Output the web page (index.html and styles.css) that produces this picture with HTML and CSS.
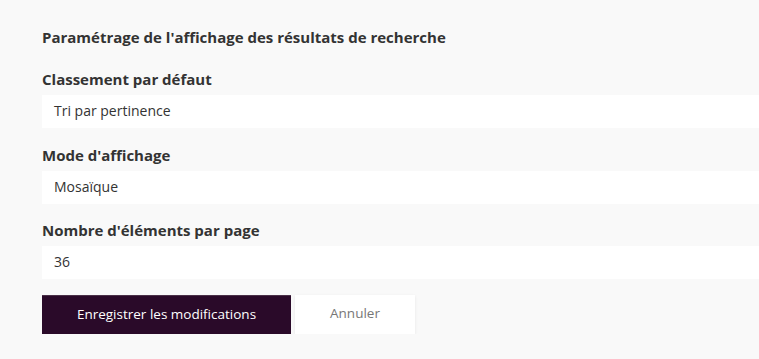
FILE: index.html
```html
<!DOCTYPE html>
<html lang="fr">
<head>
    <meta charset="UTF-8">
    <meta name="viewport" content="width=device-width, initial-scale=1.0">
    <title>Paramétrage de l'affichage</title>
    <link rel="stylesheet" href="styles.css">
</head>
<body>
    <form class="settings">
        <h2>Paramétrage de l'affichage des résultats de recherche</h2>

        <div class="field">
            <label for="sort">Classement par défaut</label>
            <div class="select" id="sort">Tri par pertinence</div>
        </div>

        <div class="field">
            <label for="mode">Mode d'affichage</label>
            <div class="select" id="mode">Mosaïque</div>
        </div>

        <div class="field">
            <label for="perPage">Nombre d'éléments par page</label>
            <div class="select" id="perPage">36</div>
        </div>

        <div class="actions">
            <button type="submit" class="btn-save">Enregistrer les modifications</button>
            <button type="button" class="btn-cancel">Annuler</button>
        </div>
    </form>
</body>
</html>
```

FILE: styles.css
```css
body {
    margin: 0;
    background: #f9f9f9;
    font-family: "Open Sans", Arial, sans-serif;
    color: #333;
}
.settings {
    padding: 27px 0 0 42px;
}
h2 {
    margin: 0 0 22px;
    font-size: 15px;
    line-height: 20px;
    font-weight: 700;
    color: #333;
}
.field {
    margin-bottom: 16.5px;
}
label {
    display: block;
    font-size: 15px;
    line-height: 20px;
    font-weight: 700;
    margin-bottom: 6px;
}
.select {
    background: #fff;
    height: 33px;
    line-height: 32px;
    padding: 0 12px;
    font-size: 14px;
    color: #333;
}
.actions {
    display: flex;
    gap: 4px;
    margin-top: -0.5px;
}
button {
    font-family: "Open Sans", Arial, sans-serif;
    font-size: 13.5px;
    height: 39px;
    padding: 0 0 3px;
    border: none;
    cursor: pointer;
}
.btn-save {
    width: 249px;
    background: #2a0a29;
    border-top: 1px solid #4a3048;
    color: #fff;
}
.btn-cancel {
    width: 120px;
    background: #fff;
    color: #777;
    box-shadow: 0 1px 3px rgba(0, 0, 0, 0.08);
}
```
